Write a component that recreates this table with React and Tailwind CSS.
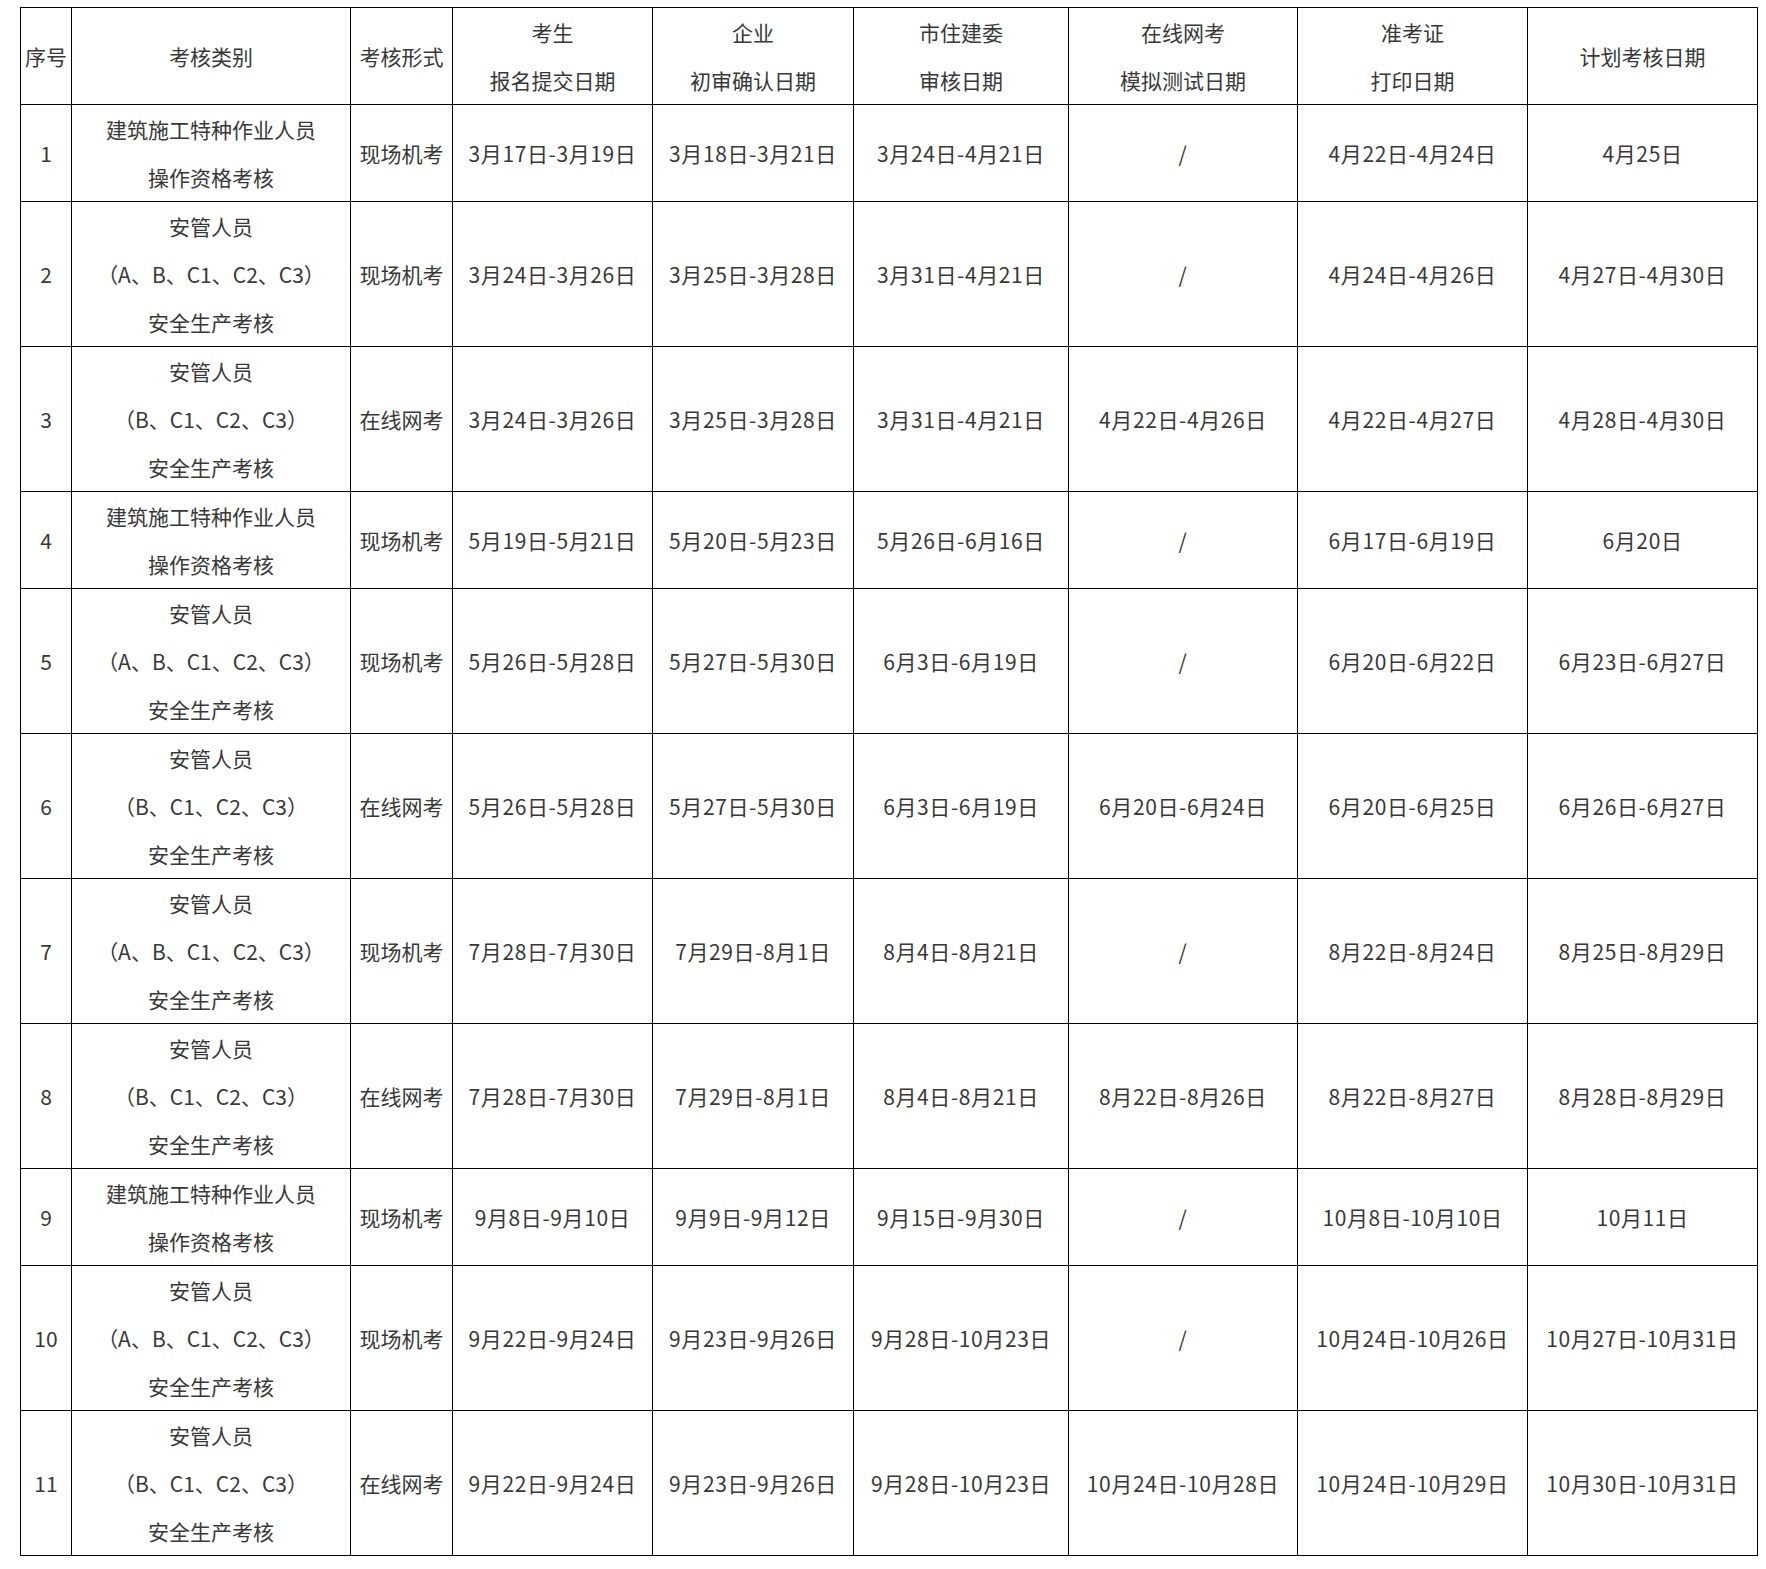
import React from "react";

const A = ["安管人员", "（A、B、C1、C2、C3）", "安全生产考核"];
const B = ["安管人员", "（B、C1、C2、C3）", "安全生产考核"];
const J = ["建筑施工特种作业人员", "操作资格考核"];

const rows = [
  ["1", J, "现场机考", "3月17日-3月19日", "3月18日-3月21日", "3月24日-4月21日", "/", "4月22日-4月24日", "4月25日"],
  ["2", A, "现场机考", "3月24日-3月26日", "3月25日-3月28日", "3月31日-4月21日", "/", "4月24日-4月26日", "4月27日-4月30日"],
  ["3", B, "在线网考", "3月24日-3月26日", "3月25日-3月28日", "3月31日-4月21日", "4月22日-4月26日", "4月22日-4月27日", "4月28日-4月30日"],
  ["4", J, "现场机考", "5月19日-5月21日", "5月20日-5月23日", "5月26日-6月16日", "/", "6月17日-6月19日", "6月20日"],
  ["5", A, "现场机考", "5月26日-5月28日", "5月27日-5月30日", "6月3日-6月19日", "/", "6月20日-6月22日", "6月23日-6月27日"],
  ["6", B, "在线网考", "5月26日-5月28日", "5月27日-5月30日", "6月3日-6月19日", "6月20日-6月24日", "6月20日-6月25日", "6月26日-6月27日"],
  ["7", A, "现场机考", "7月28日-7月30日", "7月29日-8月1日", "8月4日-8月21日", "/", "8月22日-8月24日", "8月25日-8月29日"],
  ["8", B, "在线网考", "7月28日-7月30日", "7月29日-8月1日", "8月4日-8月21日", "8月22日-8月26日", "8月22日-8月27日", "8月28日-8月29日"],
  ["9", J, "现场机考", "9月8日-9月10日", "9月9日-9月12日", "9月15日-9月30日", "/", "10月8日-10月10日", "10月11日"],
  ["10", A, "现场机考", "9月22日-9月24日", "9月23日-9月26日", "9月28日-10月23日", "/", "10月24日-10月26日", "10月27日-10月31日"],
  ["11", B, "在线网考", "9月22日-9月24日", "9月23日-9月26日", "9月28日-10月23日", "10月24日-10月28日", "10月24日-10月29日", "10月30日-10月31日"],
];

const headers = [
  ["序号"],
  ["考核类别"],
  ["考核形式"],
  ["考生", "报名提交日期"],
  ["企业", "初审确认日期"],
  ["市住建委", "审核日期"],
  ["在线网考", "模拟测试日期"],
  ["准考证", "打印日期"],
  ["计划考核日期"],
];

function Cell({ lines, date }) {
  const arr = Array.isArray(lines) ? lines : [lines];
  return (
    <td
      className={
        date
          ? "border border-black p-0 text-center align-middle leading-[48px] whitespace-nowrap tracking-[0.6px]"
          : "border border-black p-0 text-center align-middle leading-[48px] whitespace-nowrap"
      }
    >
      {arr.map((l, i) => (
        <div key={i}>{l}</div>
      ))}
    </td>
  );
}

export default function App() {
  return (
    <div className="w-[1766px] h-[1569px] bg-white pt-[7px] pl-[20px] text-[#383838] text-[21px] font-['Noto_Sans_CJK_SC','Noto_Sans',sans-serif]">
      <table className="border-collapse table-fixed w-[1738px]">
        <colgroup>
          <col className="w-[51px]" />
          <col className="w-[279px]" />
          <col className="w-[102px]" />
          <col className="w-[200px]" />
          <col className="w-[201px]" />
          <col className="w-[215px]" />
          <col className="w-[229px]" />
          <col className="w-[230px]" />
          <col className="w-[230px]" />
        </colgroup>
        <tbody>
          <tr>
            {headers.map((h, i) => (
              <Cell key={i} lines={h} />
            ))}
          </tr>
          {rows.map((r, i) => (
            <tr key={i}>
              {r.map((c, j) => (
                <Cell key={j} lines={c} date={j >= 3} />
              ))}
            </tr>
          ))}
        </tbody>
      </table>
    </div>
  );
}
